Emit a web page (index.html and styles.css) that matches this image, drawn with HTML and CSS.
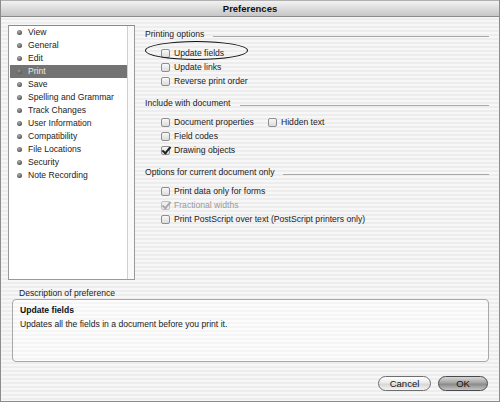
FILE: index.html
```html
<!DOCTYPE html>
<html>
<head>
<meta charset="utf-8">
<link rel="stylesheet" href="styles.css">
</head>
<body>
<div class="window">
  <div class="titlebar">Preferences</div>
  <div class="main">
    <div class="top">
      <div class="sidebar">
        <ul class="list">
          <li class="item"><span class="dot"></span>View</li>
          <li class="item"><span class="dot"></span>General</li>
          <li class="item"><span class="dot"></span>Edit</li>
          <li class="item selected"><span class="dot"></span>Print</li>
          <li class="item"><span class="dot"></span>Save</li>
          <li class="item"><span class="dot"></span>Spelling and Grammar</li>
          <li class="item"><span class="dot"></span>Track Changes</li>
          <li class="item"><span class="dot"></span>User Information</li>
          <li class="item"><span class="dot"></span>Compatibility</li>
          <li class="item"><span class="dot"></span>File Locations</li>
          <li class="item"><span class="dot"></span>Security</li>
          <li class="item"><span class="dot"></span>Note Recording</li>
        </ul>
        <div class="scroll"></div>
      </div>
      <div class="content">
        <section class="group">
          <div class="group-head">Printing options</div>
          <div class="rows">
            <div class="row"><span class="cb"></span>Update fields<span class="circle"></span></div>
            <div class="row"><span class="cb"></span>Update links</div>
            <div class="row"><span class="cb"></span>Reverse print order</div>
          </div>
        </section>
        <section class="group">
          <div class="group-head">Include with document</div>
          <div class="rows">
            <div class="row">
              <span class="opt opt-wide"><span class="cb"></span>Document properties</span>
              <span class="opt"><span class="cb"></span>Hidden text</span>
            </div>
            <div class="row"><span class="cb"></span>Field codes</div>
            <div class="row"><span class="cb checked"></span>Drawing objects</div>
          </div>
        </section>
        <section class="group">
          <div class="group-head">Options for current document only</div>
          <div class="rows">
            <div class="row"><span class="cb"></span>Print data only for forms</div>
            <div class="row disabled"><span class="cb checked dim"></span>Fractional widths</div>
            <div class="row"><span class="cb"></span>Print PostScript over text (PostScript printers only)</div>
          </div>
        </section>
      </div>
    </div>
    <div class="desc-label">Description of preference</div>
    <div class="desc-box">
      <div class="desc-title">Update fields</div>
      <div class="desc-text">Updates all the fields in a document before you print it.</div>
    </div>
    <div class="buttons">
      <button class="btn">Cancel</button>
      <button class="btn btn-default">OK</button>
    </div>
  </div>
</div>
</body>
</html>
```

FILE: styles.css
```css
* { box-sizing: border-box; }
html, body { margin: 0; padding: 0; }
body {
  width: 500px;
  height: 402px;
  font-family: "Liberation Sans", Arial, sans-serif;
  font-size: 8.6px;
  color: #1a1a1a;
  overflow: hidden;
}
.window {
  width: 500px;
  height: 402px;
  border: 1px solid #8c8c8c;
  border-top: none;
  background: repeating-linear-gradient(to bottom, #f7f7f7 0px, #f7f7f7 2px, #ededed 2px, #ededed 4px);
  display: flex;
  flex-direction: column;
}
.titlebar {
  height: 17px;
  flex: none;
  background: linear-gradient(to bottom, #f2f2f2 0%, #dcdcdc 50%, #c6c6c6 100%);
  border-bottom: 1px solid #8a8a8a;
  border-top: 1px solid #b0b0b0;
  text-align: center;
  font-weight: bold;
  font-size: 9.5px;
  line-height: 15px;
  color: #111;
}
.main {
  flex: 1;
  padding: 8px 10px 0 7px;
  display: flex;
  flex-direction: column;
}
.top {
  display: flex;
  height: 255px;
}
.sidebar {
  width: 127px;
  height: 255px;
  flex: none;
  background: #fff;
  border: 1px solid #9a9a9a;
  border-top-color: #8a8a8a;
  display: flex;
}
.list {
  list-style: none;
  margin: 0;
  padding: 0;
  flex: 1;
}
.item {
  height: 13px;
  line-height: 13px;
  display: flex;
  align-items: center;
  padding-left: 8px;
  color: #222;
}
.item.selected {
  background: #737373;
  color: #e8e8e8;
  margin-left: 1px;
  padding-left: 7px;
}
.dot {
  width: 5px;
  height: 5px;
  border-radius: 50%;
  background: radial-gradient(circle at 40% 35%, #b0b0b0, #555 70%);
  margin-right: 6px;
  flex: none;
}
.selected .dot {
  background: radial-gradient(circle at 40% 35%, #999, #5a5a5a 70%);
}
.scroll {
  width: 7px;
  border-left: 1px solid #d0d0d0;
  background: #fafafa;
}
.content {
  flex: 1;
  margin-left: 10px;
  padding-top: 2px;
}
.group { margin-bottom: 8px; }
.group-head {
  height: 14px;
  line-height: 14px;
  display: flex;
  align-items: center;
  color: #222;
}
.group-head::after {
  content: "";
  flex: 1;
  height: 1px;
  margin-left: 9px;
  margin-top: 4px;
  background: #a8a8a8;
}
.rows {
  margin-top: 5px;
  padding-left: 16px;
}
.row {
  position: relative;
  height: 14px;
  line-height: 14px;
  display: flex;
  align-items: center;
  color: #222;
}
.row.disabled { color: #9a9a9a; }
.opt { display: flex; align-items: center; }
.opt-wide { width: 107px; }
.cb {
  width: 9px;
  height: 9px;
  border: 1px solid #8e8e8e;
  border-radius: 2px;
  background: linear-gradient(to bottom, #f8f8f8, #dcdcdc);
  margin-right: 4px;
  flex: none;
  position: relative;
}
.cb.checked::after {
  content: "";
  position: absolute;
  left: 2px;
  top: -2px;
  width: 3px;
  height: 7px;
  border-right: 2px solid #222;
  border-bottom: 2px solid #222;
  transform: rotate(40deg);
}
.cb.dim { border-color: #c0c0c0; background: #f0f0f0; }
.cb.dim::after { border-color: #aaa; }
.circle {
  position: absolute;
  left: -16px;
  top: -5px;
  width: 103px;
  height: 19px;
  border: 1.5px solid #111;
  border-radius: 50%;
}
.desc-label {
  margin-top: 8px;
  height: 11px;
  line-height: 11px;
  padding-left: 11px;
  color: #222;
}
.desc-box {
  margin-left: 4px;
  height: 63px;
  border: 1px solid #a8a8a8;
  border-radius: 4px;
  background: repeating-linear-gradient(to bottom, #fcfcfc 0px, #fcfcfc 2px, #f5f5f5 2px, #f5f5f5 4px);
  padding: 3px 7px;
}
.desc-title {
  font-weight: bold;
  line-height: 14px;
  color: #111;
}
.desc-text {
  line-height: 14px;
  color: #222;
}
.buttons {
  margin-top: 14px;
  display: flex;
  justify-content: flex-end;
  gap: 7px;
  padding-right: 1px;
}
.btn {
  font-family: "Liberation Sans", Arial, sans-serif;
  font-size: 9.5px;
  height: 15px;
  padding: 0;
  border: 1px solid #6e6e6e;
  border-radius: 8px;
  color: #111;
  background: linear-gradient(to bottom, #ffffff 0%, #eaeaea 45%, #d6d6d6 55%, #f4f4f4 100%);
  width: 53px;
  line-height: 13px;
}
.btn-default {
  width: 50px;
  border-color: #4a4a4a;
  background: linear-gradient(to bottom, #d8d8d8 0%, #a4a4a4 45%, #8a8a8a 55%, #c4c4c4 100%);
}
```
